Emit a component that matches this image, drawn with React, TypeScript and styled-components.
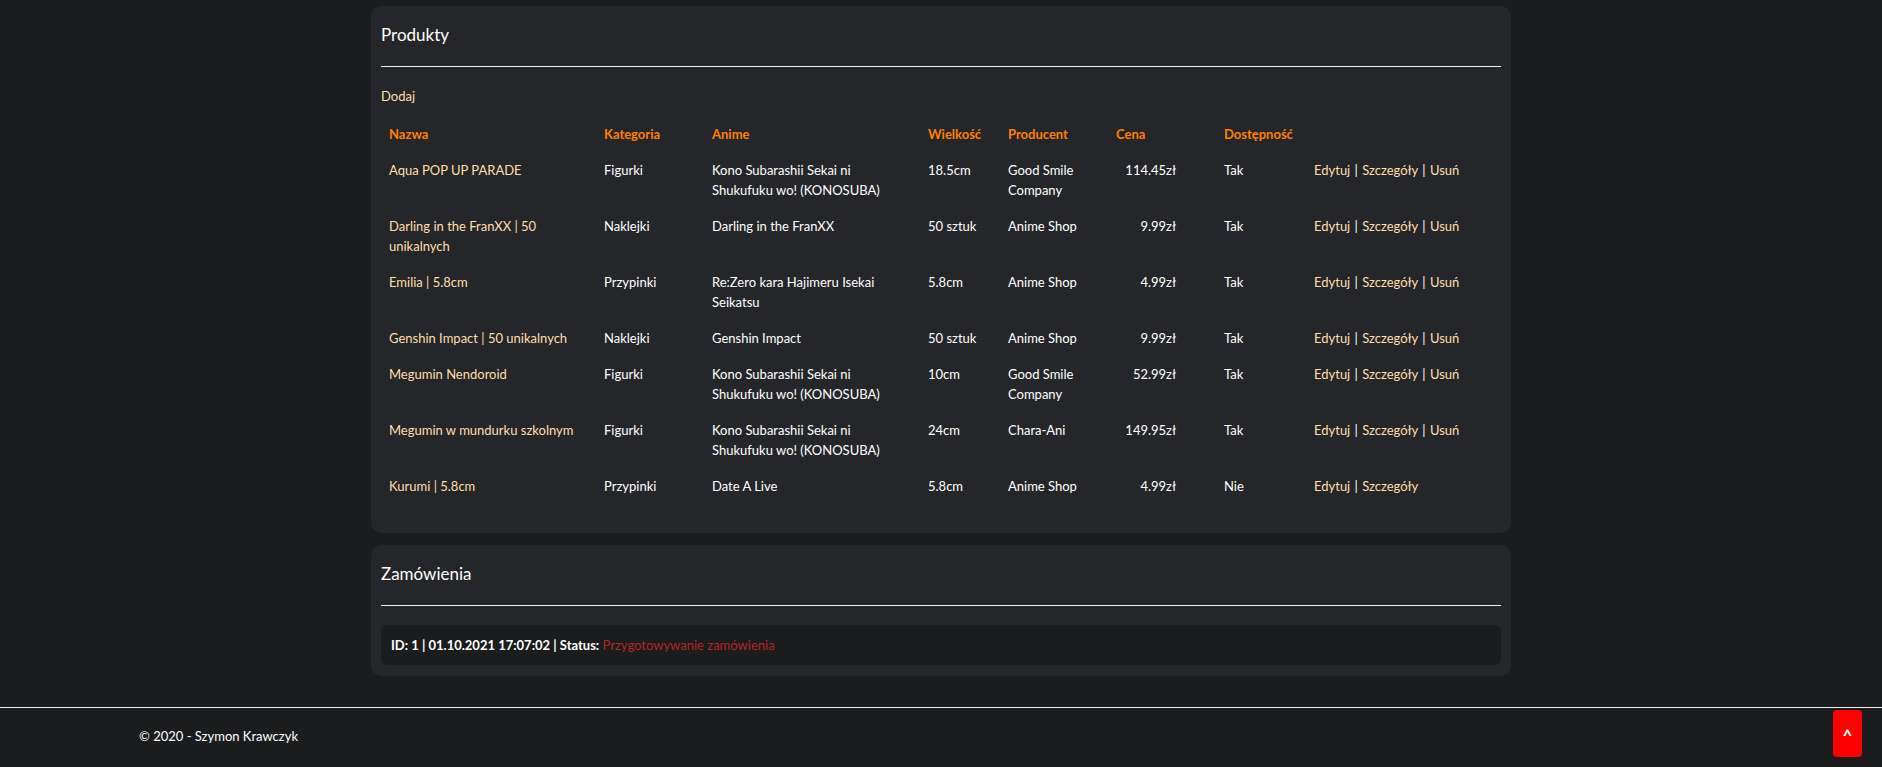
import styled, { createGlobalStyle } from "styled-components";

interface Product {
  name: string;
  category: string;
  anime: string;
  size: string;
  producer: string;
  price: string;
  available: boolean;
  removable: boolean;
}

const products: Product[] = [
  {
    name: "Aqua POP UP PARADE",
    category: "Figurki",
    anime: "Kono Subarashii Sekai ni Shukufuku wo! (KONOSUBA)",
    size: "18.5cm",
    producer: "Good Smile Company",
    price: "114.45zł",
    available: true,
    removable: true,
  },
  {
    name: "Darling in the FranXX | 50 unikalnych",
    category: "Naklejki",
    anime: "Darling in the FranXX",
    size: "50 sztuk",
    producer: "Anime Shop",
    price: "9.99zł",
    available: true,
    removable: true,
  },
  {
    name: "Emilia | 5.8cm",
    category: "Przypinki",
    anime: "Re:Zero kara Hajimeru Isekai Seikatsu",
    size: "5.8cm",
    producer: "Anime Shop",
    price: "4.99zł",
    available: true,
    removable: true,
  },
  {
    name: "Genshin Impact | 50 unikalnych",
    category: "Naklejki",
    anime: "Genshin Impact",
    size: "50 sztuk",
    producer: "Anime Shop",
    price: "9.99zł",
    available: true,
    removable: true,
  },
  {
    name: "Megumin Nendoroid",
    category: "Figurki",
    anime: "Kono Subarashii Sekai ni Shukufuku wo! (KONOSUBA)",
    size: "10cm",
    producer: "Good Smile Company",
    price: "52.99zł",
    available: true,
    removable: true,
  },
  {
    name: "Megumin w mundurku szkolnym",
    category: "Figurki",
    anime: "Kono Subarashii Sekai ni Shukufuku wo! (KONOSUBA)",
    size: "24cm",
    producer: "Chara-Ani",
    price: "149.95zł",
    available: true,
    removable: true,
  },
  {
    name: "Kurumi | 5.8cm",
    category: "Przypinki",
    anime: "Date A Live",
    size: "5.8cm",
    producer: "Anime Shop",
    price: "4.99zł",
    available: false,
    removable: false,
  },
];

const columns = [
  { label: "Nazwa", width: 215 },
  { label: "Kategoria", width: 108 },
  { label: "Anime", width: 216 },
  { label: "Wielkość", width: 80 },
  { label: "Producent", width: 108 },
  { label: "Cena", width: 108 },
  { label: "Dostępność", width: 90 },
  { label: "", width: 195 },
];

const GlobalStyle = createGlobalStyle`
  body {
    margin: 0;
    background: #1b1c1e;
    color: #ffffff;
    font-family: Lato, "Noto Sans", sans-serif;
    font-size: 13px;
    line-height: 20px;
  }
`;

const Main = styled.main`
  width: 1140px;
  margin: 0 auto;
  padding-top: 6px;
  display: flex;
  flex-direction: column;
  gap: 12px;
`;

const Panel = styled.section`
  background: #252629;
  border-radius: 10px;
  padding: 10px;
`;

const PanelTitle = styled.h4`
  margin: 7px 0 0;
  font-size: 17px;
  font-weight: 400;
  line-height: 24px;
`;

const Divider = styled.hr`
  margin: 19px 0 0;
  border: 0;
  border-top: 1px solid #f2f2f2;
`;

const AddLink = styled.a`
  display: inline-block;
  margin-top: 19px;
  color: #ffdead;
  text-decoration: none;
  cursor: pointer;
`;

const Table = styled.table`
  width: 100%;
  margin: 10px 0 19px;
  border-collapse: collapse;
  table-layout: fixed;
`;

const Col = styled.col<{ $w: number }>`
  width: ${(p) => p.$w}px;
`;

const Th = styled.th`
  padding: 8px;
  text-align: left;
  vertical-align: top;
  color: #ff8000;
  font-weight: 700;
`;

const Td = styled.td<{ $align?: string; $padRight?: number }>`
  padding: 8px ${(p) => p.$padRight ?? 8}px 8px 8px;
  text-align: ${(p) => p.$align ?? "left"};
  vertical-align: top;
  color: #ffffff;
`;

const Link = styled.a`
  color: #ffdead;
  text-decoration: none;
  cursor: pointer;
`;

const Sep = styled.span`
  margin: 0 1px;
`;

const OrderBox = styled.div`
  margin: 19px 0 1px;
  background: #1b1c1e;
  border-radius: 6px;
  padding: 10px;
`;

const OrderInfo = styled.span`
  font-weight: 700;
`;

const Status = styled.span`
  color: #b52626;
`;

const Footer = styled.footer`
  margin-top: 31px;
  border-top: 1px solid #f2f2f2;
  height: 59px;
  padding: 18px 0 0 139px;
  box-sizing: border-box;
`;

const TopButton = styled.button`
  position: fixed;
  right: 20px;
  bottom: 10px;
  width: 29px;
  height: 47px;
  border: 0;
  border-radius: 4px;
  background: #ff0000;
  color: #ffffff;
  font-family: Lato, sans-serif;
  font-weight: 700;
  font-size: 17px;
  line-height: 1;
  padding: 4px 0 0;
  cursor: pointer;
`;

function App() {
  return (
    <>
      <GlobalStyle />
      <Main>
        <Panel>
          <PanelTitle>Produkty</PanelTitle>
          <Divider />
          <AddLink>Dodaj</AddLink>
          <Table>
            <colgroup>
              {columns.map((c, i) => (
                <Col key={i} $w={c.width} />
              ))}
            </colgroup>
            <thead>
              <tr>
                {columns.map((c, i) => (
                  <Th key={i}>{c.label}</Th>
                ))}
              </tr>
            </thead>
            <tbody>
              {products.map((p) => (
                <tr key={p.name}>
                  <Td>
                    <Link>{p.name}</Link>
                  </Td>
                  <Td>{p.category}</Td>
                  <Td $padRight={30}>{p.anime}</Td>
                  <Td>{p.size}</Td>
                  <Td>{p.producer}</Td>
                  <Td $align="right" $padRight={40}>
                    {p.price}
                  </Td>
                  <Td>{p.available ? "Tak" : "Nie"}</Td>
                  <Td>
                    <Link>Edytuj</Link> <Sep>|</Sep> <Link>Szczegóły</Link>
                    {p.removable && (
                      <>
                        {" "}
                        <Sep>|</Sep> <Link>Usuń</Link>
                      </>
                    )}
                  </Td>
                </tr>
              ))}
            </tbody>
          </Table>
        </Panel>
        <Panel>
          <PanelTitle>Zamówienia</PanelTitle>
          <Divider />
          <OrderBox>
            <OrderInfo>ID: 1 | 01.10.2021 17:07:02 | Status:</OrderInfo>{" "}
            <Status>Przygotowywanie zamówienia</Status>
          </OrderBox>
        </Panel>
      </Main>
      <Footer>© 2020 - Szymon Krawczyk</Footer>
      <TopButton>^</TopButton>
    </>
  );
}

export default App;
